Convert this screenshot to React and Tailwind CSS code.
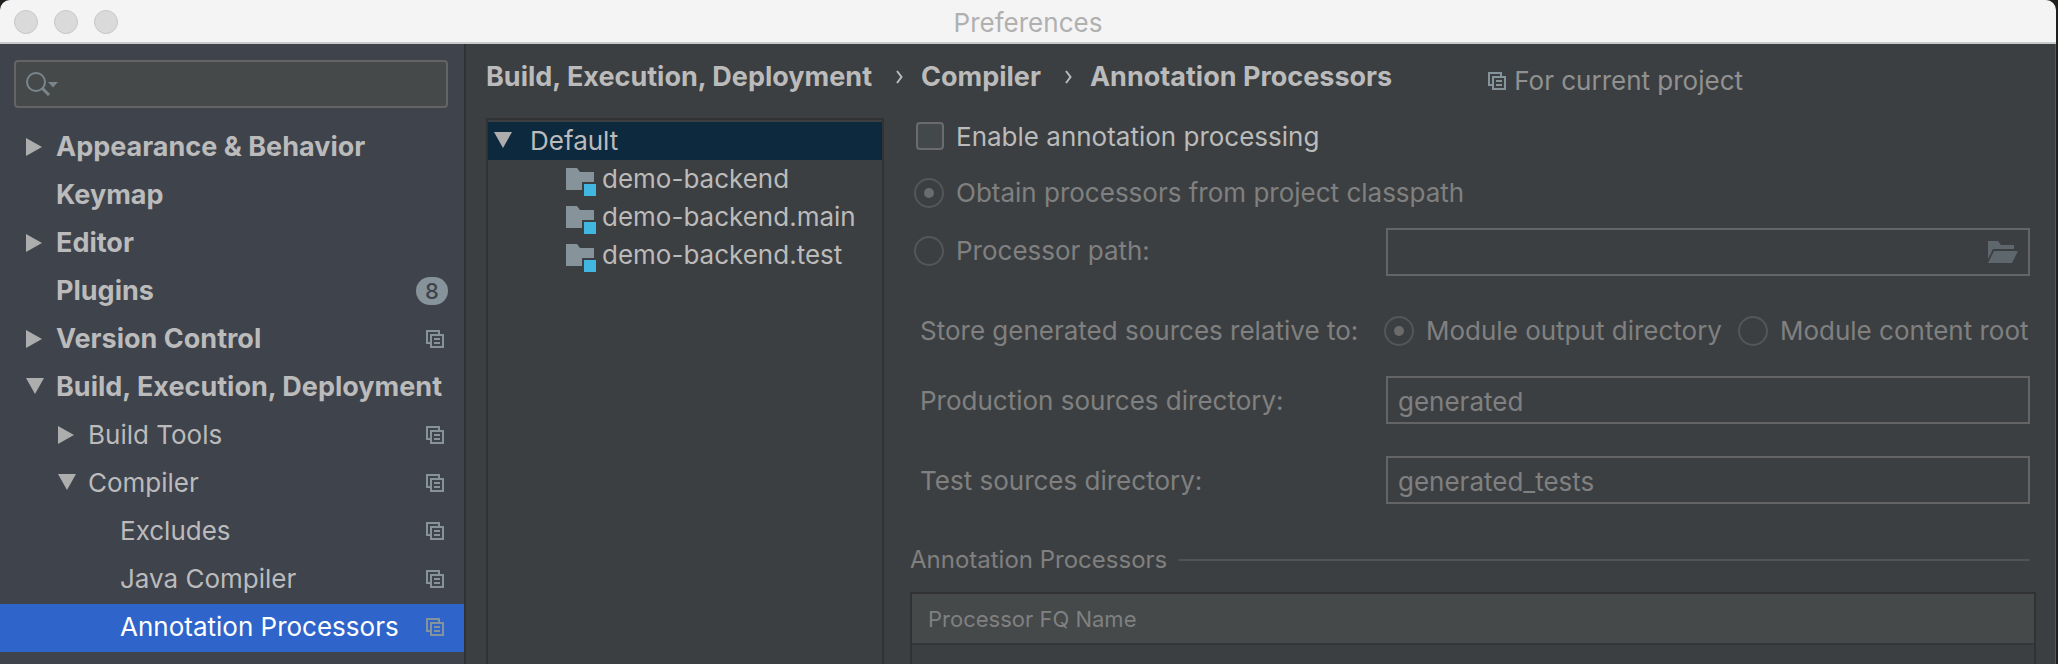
const sidebarItems = [
  { label: "Appearance & Behavior", level: 0, arrow: "right" },
  { label: "Keymap", level: 0 },
  { label: "Editor", level: 0, arrow: "right" },
  { label: "Plugins", level: 0, badge: "8" },
  { label: "Version Control", level: 0, arrow: "right", project: true },
  { label: "Build, Execution, Deployment", level: 0, arrow: "down" },
  { label: "Build Tools", level: 1, arrow: "right", project: true },
  { label: "Compiler", level: 1, arrow: "down", project: true },
  { label: "Excludes", level: 2, project: true },
  { label: "Java Compiler", level: 2, project: true },
  { label: "Annotation Processors", level: 2, project: true, selected: true },
];

const modules = ["demo-backend", "demo-backend.main", "demo-backend.test"];

const indents = ["pl-[26px]", "pl-[58px]", "pl-[90px]"];

function Arrow({ direction }) {
  return (
    <svg width="18" height="18" viewBox="0 0 18 18" className="shrink-0" fill="#adadad" aria-hidden="true">
      {direction === "right" && <path d="M0 0 16 9 0 18Z" />}
      {direction === "down" && <path d="M0 0H18L9 16Z" />}
    </svg>
  );
}

function ProjectIcon() {
  return (
    <svg width="18" height="18" viewBox="0 0 18 18" className="shrink-0" fill="none" stroke="#87939a" strokeWidth="2" aria-hidden="true">
      <path d="M4 13H1V1H13V4" />
      <path d="M5 5H17V17H5Z" />
      <path d="M8 9H14M8 13H14" />
    </svg>
  );
}

function ModuleIcon() {
  return (
    <svg width="30" height="28" viewBox="0 0 30 28" className="mt-[6px] shrink-0" aria-hidden="true">
      <path d="M0 0H11L14 4H28V14H16V22H0Z" fill="#87939a" />
      <path d="M18 16H30V28H18Z" fill="#40b6e0" />
    </svg>
  );
}

function OpenFolderIcon() {
  return (
    <svg width="30" height="22" viewBox="0 0 30 22" aria-hidden="true" fill="#5e676b">
      <path d="M0 0H10L13 4H26V8H5L0 18Z" />
      <path d="M6 10H30L24 22H0Z" />
    </svg>
  );
}

function SearchIcon() {
  return (
    <svg width="32" height="24" viewBox="0 0 32 24" fill="none" stroke="#7a858c" aria-hidden="true">
      <circle cx="10" cy="10" r="9" strokeWidth="2" />
      <path d="M16.5 16.5 23 23" strokeWidth="3" />
      <path d="M22 10H32L27 15.5Z" fill="#7a858c" stroke="none" />
    </svg>
  );
}

function Chevron() {
  return (
    <svg width="7" height="14" viewBox="0 0 7 14" className="ml-[6px] shrink-0" fill="none" stroke="#bbbbbb" strokeWidth="2" aria-hidden="true">
      <path d="M1 1 5.5 7 1 13" />
    </svg>
  );
}

function Radio({ id, name, label, checked }) {
  return (
    <div className="flex items-center gap-3">
      <input
        type="radio"
        id={id}
        name={name}
        defaultChecked={checked}
        disabled
        className="grid size-[30px] shrink-0 appearance-none place-items-center rounded-full border-2 border-[#545658] checked:before:size-[10px] checked:before:rounded-full checked:before:bg-[#6b6b6b]"
      />
      <label htmlFor={id} className="whitespace-nowrap">{label}</label>
    </div>
  );
}

function DirectoryField({ id, label, value }) {
  return (
    <div className="flex items-center">
      <label htmlFor={id} className="w-[476px] shrink-0 pt-[2px] pl-[10px]">{label}</label>
      <input
        id={id}
        type="text"
        defaultValue={value}
        disabled
        className="h-12 min-w-0 flex-1 border-2 border-[#646464] bg-transparent px-[10px] pt-[2px] text-[#808080]"
      />
    </div>
  );
}

function TitleBar() {
  return (
    <header className="relative flex h-11 shrink-0 items-center gap-4 border-b-2 border-[#c8cbcb] bg-[#f4f4f4] px-[14px] pt-[2px]">
      {["Close", "Minimize", "Zoom"].map((name) => (
        <button key={name} type="button" aria-label={name} className="size-6 rounded-full border border-[#c6c6c6] bg-[#dadada]" />
      ))}
      <h1 className="pointer-events-none absolute inset-0 flex items-center justify-center pt-1 text-[26px] text-[#b0b0b0]">Preferences</h1>
    </header>
  );
}

function Sidebar() {
  return (
    <aside className="flex w-[466px] shrink-0 flex-col gap-4 border-r-2 border-[#323232] bg-[#3f434c] pt-4">
      <div className="mx-[14px] mr-4 flex h-12 items-center rounded border-2 border-[#646464] bg-[#45494a] pl-[10px]">
        <SearchIcon />
        <input type="search" aria-label="Search settings" className="min-w-0 flex-1 bg-transparent px-2 outline-none" />
      </div>
      <ul>
        {sidebarItems.map((item) => (
          <li key={item.label}>
            <button
              type="button"
              className={`flex h-12 w-full items-center gap-3 whitespace-nowrap pb-[2px] text-left ${indents[item.level]} ${item.badge ? "pr-4" : "pr-5"} ${item.level === 0 ? "text-[27px] font-bold" : ""} ${item.selected ? "bg-[#2f65ca] text-white" : ""}`}
            >
              <Arrow direction={item.arrow} />
              <span className="flex-1">{item.label}</span>
              {item.badge && (
                <span className="flex h-7 w-8 items-center justify-center rounded-full bg-[#87939a] text-[22px] font-medium text-[#3f434c]">
                  {item.badge}
                </span>
              )}
              {item.project && <ProjectIcon />}
            </button>
          </li>
        ))}
      </ul>
    </aside>
  );
}

function ModuleTree() {
  return (
    <div className="w-[398px] shrink-0 border-2 border-b-0 border-[#323232] pt-[2px]">
      <button type="button" className="flex h-[38px] w-full items-center gap-[18px] bg-[#0d293e] pl-[6px] text-left">
        <Arrow direction="down" />
        Default
      </button>
      <ul>
        {modules.map((name) => (
          <li key={name}>
            <button type="button" className="flex h-[38px] w-full items-center gap-[6px] whitespace-nowrap pl-[78px] text-left">
              <ModuleIcon />
              {name}
            </button>
          </li>
        ))}
      </ul>
    </div>
  );
}

function ProcessorForm() {
  return (
    <form className="flex min-w-0 flex-1 flex-col text-[#808080]">
      <div className="flex h-9 items-center gap-3 pl-[6px] text-[#bbbbbb]">
        <input
          type="checkbox"
          id="enable"
          className="size-7 shrink-0 appearance-none rounded border-2 border-[#6b6b6b] bg-[#43494a]"
        />
        <label htmlFor="enable" className="pt-[2px]">Enable annotation processing</label>
      </div>
      <div className="mt-5 flex h-[38px] items-center pl-1">
        <Radio id="classpath" name="source" label="Obtain processors from project classpath" checked />
      </div>
      <div className="mt-4 flex items-center pr-[25px]">
        <div className="w-[476px] shrink-0 pb-[2px] pl-1">
          <Radio id="path" name="source" label="Processor path:" />
        </div>
        <div className="flex h-12 min-w-0 flex-1 items-center border-2 border-[#646464] pr-[10px]">
          <input type="text" aria-label="Processor path" disabled className="min-w-0 flex-1 bg-transparent px-[10px]" />
          <button type="button" disabled aria-label="Browse">
            <OpenFolderIcon />
          </button>
        </div>
      </div>
      <div role="radiogroup" aria-labelledby="store-label" className="mt-9 flex h-[38px] items-center">
        <span id="store-label" className="w-[474px] shrink-0 pl-[10px]">Store generated sources relative to:</span>
        <div className="flex gap-4">
          <Radio id="output" name="store" label="Module output directory" checked />
          <Radio id="content" name="store" label="Module content root" />
        </div>
      </div>
      <div className="mt-[26px] flex flex-col gap-8 pr-[25px]">
        <DirectoryField id="production" label="Production sources directory:" value="generated" />
        <DirectoryField id="test" label="Test sources directory:" value="generated_tests" />
      </div>
      <div className="mt-[38px] flex h-9 items-center gap-3 pr-[25px] text-[24px]">
        <h2>Annotation Processors</h2>
        <div className="h-[2px] flex-1 bg-[#515355]" />
      </div>
      <div className="mt-[14px] mr-[19px] flex-1 border-2 border-b-0 border-[#323232]">
        <table className="w-full text-[22px]">
          <thead>
            <tr>
              <th className="h-[50px] border-b-2 border-[#343638] bg-[#45494a] px-4 text-left font-normal">Processor FQ Name</th>
            </tr>
          </thead>
        </table>
      </div>
    </form>
  );
}

export default function App() {
  return (
    <div className="flex min-h-screen bg-[#201f1c] pr-[2px] font-['Inter','Liberation_Sans',sans-serif] text-[26px] leading-8 text-[#bbbbbb]">
      <div className="flex min-w-0 flex-1 flex-col overflow-hidden rounded-t-[10px] bg-[#3c3f41]">
        <TitleBar />
        <div className="flex min-h-0 flex-1 border-r border-[#55564f]">
          <Sidebar />
          <main className="flex min-w-0 flex-1 flex-col pl-5">
            <div className="flex h-[74px] shrink-0 items-center pb-2 whitespace-nowrap">
              <nav aria-label="Breadcrumb" className="flex items-center gap-[18px] text-[27px] font-bold">
                <a href="#build">Build, Execution, Deployment</a>
                <Chevron />
                <a href="#compiler">Compiler</a>
                <Chevron />
                <a href="#processors">Annotation Processors</a>
              </nav>
              <p className="ml-24 flex items-center gap-2 pt-2 text-[#919191]">
                <ProjectIcon />
                For current project
              </p>
            </div>
            <div className="flex flex-1 gap-[26px]">
              <ModuleTree />
              <ProcessorForm />
            </div>
          </main>
        </div>
      </div>
    </div>
  );
}
